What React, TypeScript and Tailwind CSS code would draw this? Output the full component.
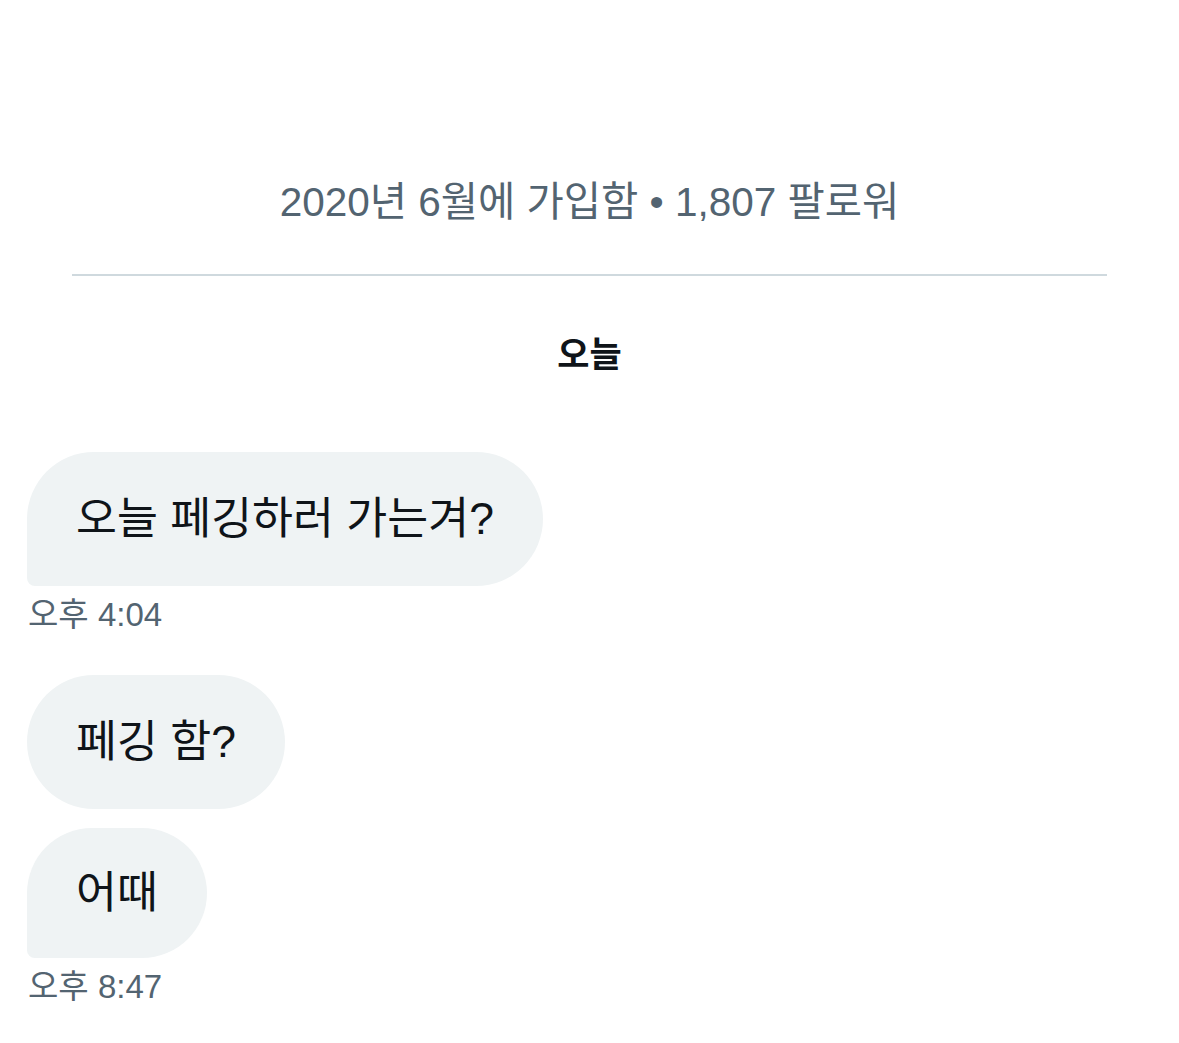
const font = { fontFamily: '"Liberation Sans", "Noto Sans CJK KR", sans-serif' };

function Bubble({ text, tail, short }: { text: string; tail?: boolean; short?: boolean }) {
  return (
    <div
      className={
        "self-start bg-[#eff3f4] px-[49px] text-[44.5px] leading-[50px] text-[#0f1419] rounded-[67px] " +
        (short ? "py-[40px] " : "py-[42px] ") +
        (tail ? "rounded-bl-[8px]" : "")
      }
    >
      {text}
    </div>
  );
}

function Time({ children }: { children: string }) {
  return (
    <div className="mt-[10px] pl-[1px] text-[33px] leading-[38px] text-[#536471]">
      {children}
    </div>
  );
}

export default function App() {
  return (
    <div className="min-h-screen w-[1179px] bg-white" style={font}>
      <div className="pt-[177px] text-center text-[40.5px] leading-[50px] text-[#536471]">
        2020년 6월에 가입함 • 1,807 팔로워
      </div>
      <div className="mx-[72px] mt-[47px] h-[2px] bg-[#cfd9de]" />
      <div className="mt-[56px] text-center text-[35px] font-bold leading-[46px] text-[#0f1419]">
        오늘
      </div>

      <div className="mt-[74px] flex flex-col px-[27px]">
        <Bubble text="오늘 페깅하러 가는겨?" tail />
        <Time>오후 4:04</Time>
        <div className="mt-[41px] flex flex-col gap-[19px]">
          <Bubble text="페깅 함?" />
          <Bubble text="어때" tail short />
        </div>
        <Time>오후 8:47</Time>
      </div>
    </div>
  );
}
